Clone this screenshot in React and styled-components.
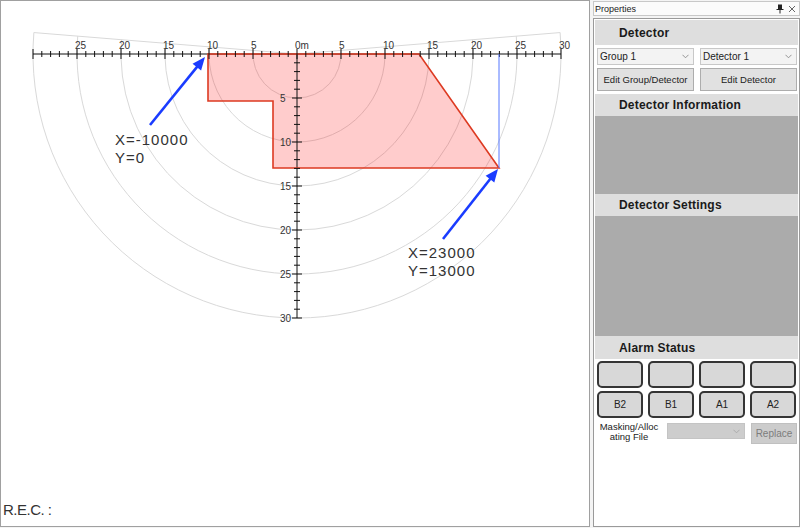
import React from "react";
import styled, { createGlobalStyle } from "styled-components";

const GlobalStyle = createGlobalStyle`
  html, body { margin: 0; padding: 0; background: #f4f4f4; }
  body { font-family: "Liberation Sans", Arial, sans-serif; }
  * { box-sizing: border-box; }
`;

const Screen = styled.div`
  display: flex;
  width: 800px;
  height: 528px;
  background: #f4f4f4;
  overflow: hidden;
`;

const Canvas = styled.div`
  width: 590px;
  height: 527px;
  border: 1px solid #a0a0a0;
  background: #fff;
  display: flex;
  flex-direction: column;
`;

const Chart = styled.svg`
  display: block;
`;

const AxisLabel = styled.text`
  font-family: "Liberation Sans", Arial, sans-serif;
  font-size: 10px;
  fill: #333;
`;

const Coord = styled.text`
  font-family: "Liberation Sans", Arial, sans-serif;
  font-size: 15px;
  letter-spacing: 1px;
  fill: #333;
`;

const RecLabel = styled.div`
  margin-top: auto;
  padding: 0 0 8px 2px;
  font-size: 15px;
  line-height: 17px;
  letter-spacing: -0.5px;
  color: #333;
`;

const Panel = styled.div`
  width: 207px;
  height: 527px;
  margin-left: 3px;
  display: flex;
  flex-direction: column;
`;

const TitleBar = styled.div`
  height: 15px;
  margin-top: 1px;
  border: 1px solid #c8c8c8;
  background: #fbfbfb;
  display: flex;
  align-items: center;
  padding: 0 3px 0 1px;
  font-size: 9px;
  color: #222;
`;

const TitleText = styled.span`
  flex: 1;
`;

const TitleIcons = styled.div`
  display: flex;
  align-items: center;
  gap: 4px;
`;

const Content = styled.div`
  flex: 1;
  margin-top: 2px;
  border: 1px solid #9a9a9a;
  background: #fff;
  padding: 1px;
  display: flex;
  flex-direction: column;
`;

const SectionHeader = styled.div`
  height: ${(p) => p.$h}px;
  background: #dedede;
  display: flex;
  align-items: center;
  padding-left: 24px;
  font-size: 12px;
  font-weight: bold;
  letter-spacing: 0.2px;
  color: #1a1a1a;
`;

const GrayArea = styled.div`
  height: ${(p) => p.$h}px;
  background: #ababab;
`;

const Controls = styled.div`
  padding: 3px 1px 3px 2px;
  display: grid;
  grid-template-columns: 1fr 1fr;
  column-gap: 6px;
  row-gap: 3px;
`;

const Combo = styled.div`
  height: 17px;
  border: 1px solid ${(p) => (p.$disabled ? "#c4c4c4" : "#c8c8c8")};
  background: ${(p) => (p.$disabled ? "#cdcdcd" : "#f3f3f3")};
  display: flex;
  align-items: center;
  justify-content: space-between;
  padding: 0 4px 0 2px;
  font-size: 10px;
  color: #222;
`;

const Button = styled.div`
  height: 23px;
  border: 1px solid ${(p) => (p.$disabled ? "#c0c0c0" : "#adadad")};
  background: ${(p) => (p.$disabled ? "#cccccc" : "#e1e1e1")};
  color: ${(p) => (p.$disabled ? "#7c7c7c" : "#222")};
  display: flex;
  align-items: center;
  justify-content: center;
  font-size: 9.5px;
`;

const AlarmGrid = styled.div`
  padding: 2px 2px 0 2px;
  display: grid;
  grid-template-columns: repeat(4, 1fr);
  grid-auto-rows: 27px;
  column-gap: 5px;
  row-gap: 3px;
`;

const AlarmButton = styled.div`
  border: 2px solid #353535;
  border-radius: 5px;
  background: #d8d8d8;
  display: flex;
  align-items: center;
  justify-content: center;
  font-size: 10px;
  color: #222;
`;

const MaskRow = styled.div`
  margin-top: 3px;
  padding: 0 2px;
  display: grid;
  grid-template-columns: 64px 78px 46px;
  column-gap: 6px;
  align-items: start;
`;

const MaskLabel = styled.div`
  font-size: 9.5px;
  line-height: 10px;
  text-align: center;
  color: #222;
  padding-top: 1px;
`;

const MaskCombo = styled(Combo)`
  margin-top: 2px;
  height: 16px;
`;

const ReplaceButton = styled(Button)`
  margin-top: 2px;
  height: 21px;
  font-size: 10px;
`;

const Chevron = ({ color = "#8a8a8a" }) => (
  <svg width="7" height="5" viewBox="0 0 7 5">
    <polyline points="0.5,0.8 3.5,3.8 6.5,0.8" fill="none" stroke={color} strokeWidth="0.9" />
  </svg>
);

const PinIcon = () => (
  <svg width="8" height="10" viewBox="0 0 8 10">
    <rect x="2" y="0.5" width="4" height="4.5" fill="#222" />
    <line x1="0.5" y1="5.5" x2="7.5" y2="5.5" stroke="#222" strokeWidth="1" />
    <line x1="4" y1="5.5" x2="4" y2="9.5" stroke="#222" strokeWidth="1" />
  </svg>
);

const CloseIcon = () => (
  <svg width="8" height="8" viewBox="0 0 8 8">
    <path d="M1 1 L7 7 M7 1 L1 7" stroke="#555" strokeWidth="0.9" />
  </svg>
);

const O = { x: 297, y: 54 };
const S = 8.8;
const TH = Math.atan2(21.5, 264);

function arcPath(r) {
  const dx = r * Math.cos(TH);
  const dy = r * Math.sin(TH);
  return `M ${O.x - dx} ${O.y - dy} A ${r} ${r} 0 1 0 ${O.x + dx} ${O.y - dy}`;
}

function Arrow({ x1, y1, x2, y2 }) {
  const dx = x2 - x1;
  const dy = y2 - y1;
  const L = Math.hypot(dx, dy);
  const ux = dx / L;
  const uy = dy / L;
  const hl = 13;
  const hw = 5.5;
  const bx = x2 - ux * hl;
  const by = y2 - uy * hl;
  const px = -uy;
  const py = ux;
  return (
    <g>
      <line x1={x1} y1={y1} x2={bx + ux} y2={by + uy} stroke="#1a3cff" strokeWidth="2.6" />
      <polygon
        points={`${x2},${y2} ${bx + px * hw},${by + py * hw} ${bx - px * hw},${by - py * hw}`}
        fill="#1a3cff"
      />
    </g>
  );
}

function RangeChart() {
  const rMax = 30 * S;
  const hTicks = [];
  for (let k = -30; k <= 30; k++) {
    const x = O.x + k * S;
    const major = k % 5 === 0;
    hTicks.push(
      <line key={"h" + k} x1={x} y1={major ? 49 : 51} x2={x} y2={major ? 59 : 57} stroke="#111" strokeWidth="1" />
    );
  }
  const vTicks = [];
  for (let k = 1; k <= 30; k++) {
    const y = O.y + k * S;
    const major = k % 5 === 0;
    vTicks.push(
      <line key={"v" + k} x1={major ? 292 : 294} y1={y} x2={major ? 302 : 300} y2={y} stroke="#111" strokeWidth="1" />
    );
  }
  const hLabels = [-25, -20, -15, -10, -5, 0, 5, 10, 15, 20, 25, 30];
  const vLabels = [5, 10, 15, 20, 25, 30];
  const poly = "208,54 419,54 499,168 273,168 273,101 208,101";
  return (
    <Chart width="588" height="330" viewBox="1 1 588 330">
      <g stroke="#d9d9d9" strokeWidth="1" fill="none">
        {[1, 2, 3, 4, 5, 6].map((i) => (
          <path key={i} d={arcPath(i * 5 * S)} />
        ))}
        <line x1={O.x} y1={O.y} x2={O.x - rMax * Math.cos(TH)} y2={O.y - rMax * Math.sin(TH)} />
        <line x1={O.x} y1={O.y} x2={O.x + rMax * Math.cos(TH)} y2={O.y - rMax * Math.sin(TH)} />
      </g>
      <polygon points={poly} fill="rgba(255,0,0,0.2)" stroke="none" />
      <line x1={O.x - rMax} y1={O.y} x2={O.x + rMax} y2={O.y} stroke="#111" strokeWidth="1" />
      <line x1={O.x} y1={O.y} x2={O.x} y2={O.y + rMax} stroke="#111" strokeWidth="1" />
      <polygon points={poly} fill="none" stroke="#dd3a22" strokeWidth="1.6" />
      {hTicks}
      {vTicks}
      {hLabels.map((k) => (
        <AxisLabel key={"hl" + k} x={O.x + k * S - 2} y={49}>
          {k === 0 ? "0m" : Math.abs(k)}
        </AxisLabel>
      ))}
      {vLabels.map((k) => (
        <AxisLabel key={"vl" + k} x={280} y={O.y + k * S + 4}>
          {k}
        </AxisLabel>
      ))}
      <line x1="499" y1="54" x2="499" y2="168" stroke="#5577ff" strokeWidth="1" />
      <Arrow x1={150} y1={125} x2={205} y2={57} />
      <Arrow x1={443} y1={239} x2={498} y2={169} />
      <Coord x="115" y="145">X=-10000</Coord>
      <Coord x="115" y="163">Y=0</Coord>
      <Coord x="408" y="258">X=23000</Coord>
      <Coord x="408" y="276">Y=13000</Coord>
    </Chart>
  );
}

export default function App() {
  return (
    <>
      <GlobalStyle />
      <Screen>
        <Canvas>
          <RangeChart />
          <RecLabel>R.E.C. :</RecLabel>
        </Canvas>
        <Panel>
          <TitleBar>
            <TitleText>Properties</TitleText>
            <TitleIcons>
              <PinIcon />
              <CloseIcon />
            </TitleIcons>
          </TitleBar>
          <Content>
            <SectionHeader $h={25}>Detector</SectionHeader>
            <Controls>
              <Combo>
                <span>Group 1</span>
                <Chevron />
              </Combo>
              <Combo>
                <span>Detector 1</span>
                <Chevron />
              </Combo>
              <Button>Edit Group/Detector</Button>
              <Button>Edit Detector</Button>
            </Controls>
            <SectionHeader $h={22}>Detector Information</SectionHeader>
            <GrayArea $h={78} />
            <SectionHeader $h={22}>Detector Settings</SectionHeader>
            <GrayArea $h={120} />
            <SectionHeader $h={23}>Alarm Status</SectionHeader>
            <AlarmGrid>
              <AlarmButton />
              <AlarmButton />
              <AlarmButton />
              <AlarmButton />
              <AlarmButton>B2</AlarmButton>
              <AlarmButton>B1</AlarmButton>
              <AlarmButton>A1</AlarmButton>
              <AlarmButton>A2</AlarmButton>
            </AlarmGrid>
            <MaskRow>
              <MaskLabel>
                Masking/Alloc
                <br />
                ating File
              </MaskLabel>
              <MaskCombo $disabled>
                <span />
                <Chevron color="#a8a8a8" />
              </MaskCombo>
              <ReplaceButton $disabled>Replace</ReplaceButton>
            </MaskRow>
          </Content>
        </Panel>
      </Screen>
    </>
  );
}
